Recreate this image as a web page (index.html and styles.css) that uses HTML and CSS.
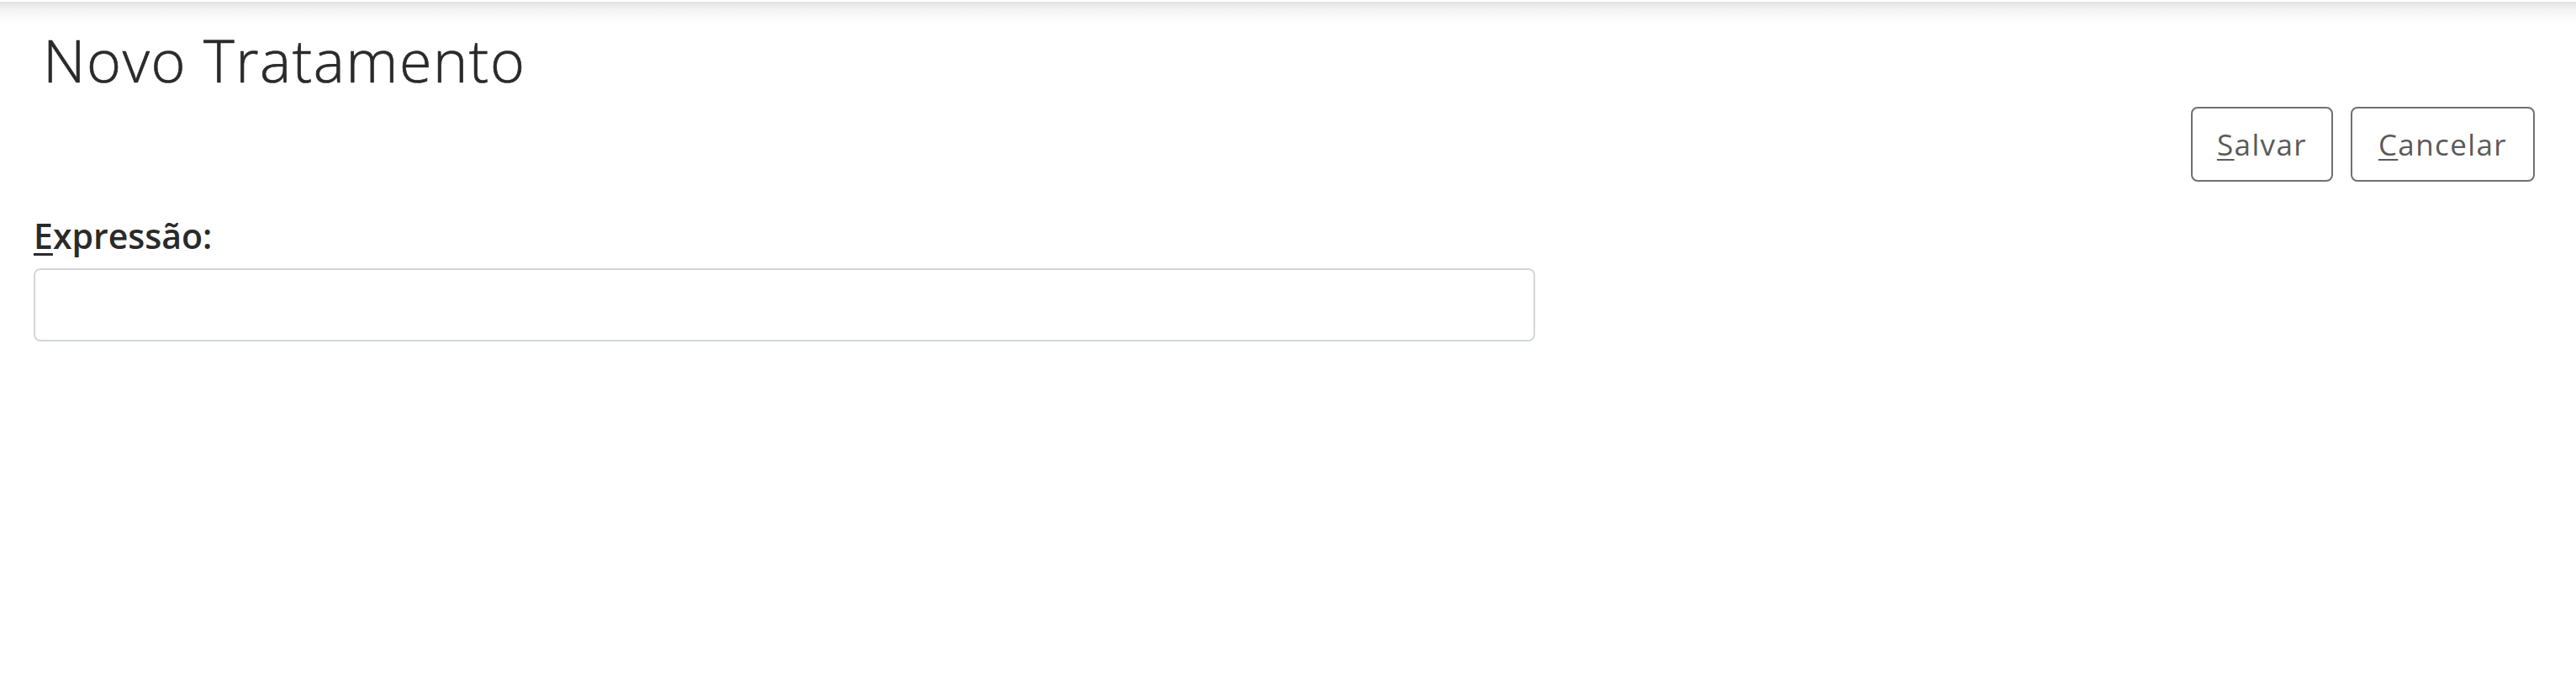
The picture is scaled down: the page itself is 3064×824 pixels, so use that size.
FILE: index.html
```html
<!DOCTYPE html>
<html lang="pt">
<head>
<meta charset="utf-8">
<title>Novo Tratamento</title>
<link rel="stylesheet" href="styles.css">
</head>
<body>
<div class="page">
  <h1 class="title">Novo Tratamento</h1>
  <div class="actions">
    <button class="btn btn-save" type="button"><u>S</u>alvar</button>
    <button class="btn btn-cancel" type="button"><u>C</u>ancelar</button>
  </div>
  <div class="field">
    <label class="label" for="expr"><u>E</u>xpressão:</label>
    <input class="input" id="expr" type="text">
  </div>
</div>
</body>
</html>
```

FILE: styles.css
```css
html, body {
  margin: 0;
  padding: 0;
  background: #ffffff;
}

body {
  font-family: "Open Sans", "Liberation Sans", sans-serif;
  background-image: linear-gradient(to bottom, #ffffff 0px, #ffffff 2px, #e2e2e2 2px, #f4f4f4 12px, #ffffff 28px);
  background-repeat: no-repeat;
  background-size: 100% 28px;
  min-height: 824px;
}

.page {
  padding: 0 49px 0 40px;
}

.title {
  margin: 37px 0 0 11px;
  font-size: 70px;
  line-height: 69px;
  font-weight: 300;
  letter-spacing: 1.6px;
  color: #2a2a2a;
  -webkit-text-stroke: 0.7px #2a2a2a;
}

.actions {
  display: flex;
  justify-content: flex-end;
  gap: 21px;
  margin-top: 21px;
}

.btn {
  height: 89px;
  box-sizing: border-box;
  display: flex;
  align-items: center;
  justify-content: center;
  background: #ffffff;
  border: 2px solid #707070;
  border-radius: 8px;
  font-family: "Open Sans", "Liberation Sans", sans-serif;
  font-size: 35px;
  font-weight: 400;
  color: #5a5a5a;
  letter-spacing: 1.4px;
  padding: 0;
}

.btn-save {
  width: 169px;
}

.btn-cancel {
  width: 219px;
}

.btn u {
  text-decoration-thickness: 2px;
  text-underline-offset: 4px;
}

.field {
  display: flex;
  flex-direction: column;
  margin-top: 36px;
}

.label {
  font-size: 41px;
  line-height: 56px;
  font-weight: 600;
  color: #2a2a2a;
}

.label u {
  text-decoration-thickness: 3px;
  text-underline-offset: 5px;
}

.input {
  margin-top: 11px;
  width: 1786px;
  height: 87px;
  box-sizing: border-box;
  border: 2px solid #d3d6da;
  border-radius: 8px;
  background: #ffffff;
  outline: none;
  font-family: "Open Sans", "Liberation Sans", sans-serif;
  font-size: 32px;
  padding: 0 20px;
}
```
